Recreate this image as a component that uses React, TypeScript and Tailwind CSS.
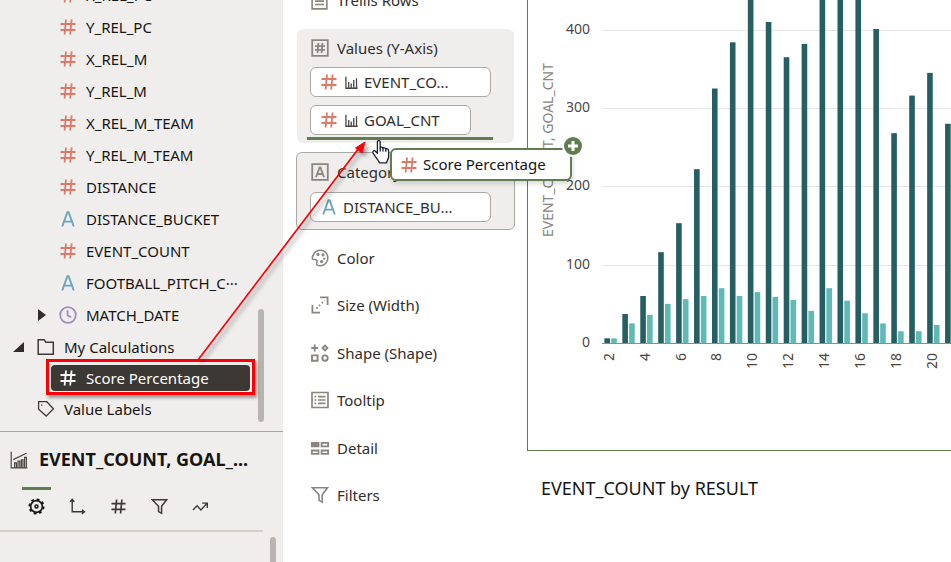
import React from "react";

type IconProps = { className?: string };

const HashIcon = ({ className = "" }: IconProps) => (
  <svg viewBox="0 0 16 16" className={className} fill="none" stroke="currentColor" strokeWidth="1.8" aria-hidden="true">
    <path d="M6 .5 4.6 15.5M11.6.5l-1.400 15M.5 5h15M.5 11h15" />
  </svg>
);

const LetterIcon = ({ className = "" }: IconProps) => (
  <svg viewBox="0 0 16 16" className={className} fill="none" stroke="currentColor" strokeWidth="1.9" aria-hidden="true">
    <path d="M2.200 15.500 7.400 1.200h1.200l5.200 14.300M4.200 10.600h7.600" />
  </svg>
);

const ClockIcon = ({ className = "" }: IconProps) => (
  <svg viewBox="0 0 18 18" className={className} fill="none" stroke="currentColor" strokeWidth="1.8" aria-hidden="true">
    <circle cx="9" cy="9" r="7.800" />
    <path d="M8.600 4.200v5.200l3.600 1.800" />
  </svg>
);

const FolderIcon = ({ className = "" }: IconProps) => (
  <svg viewBox="0 0 18 18" className={className} fill="none" stroke="currentColor" strokeWidth="1.500" aria-hidden="true">
    <path d="M1.200 16.300V1.700h6l1.600 2.600h7.500v12z" />
  </svg>
);

const TagIcon = ({ className = "" }: IconProps) => (
  <svg viewBox="0 0 18 18" className={className} fill="none" stroke="currentColor" strokeWidth="1.300" aria-hidden="true">
    <path d="M1.600 1.700h8.200l6.600 7-7.200 7.400-7.600-6.800z" />
    <circle cx="4.800" cy="5" r=".8" fill="currentColor" stroke="none" />
  </svg>
);

const MiniBarsIcon = ({ className = "" }: IconProps) => (
  <svg viewBox="0 0 14 14" className={className} fill="none" stroke="currentColor" strokeWidth="1.400" aria-hidden="true">
    <path d="M1 .8v12.400h12.600M4 13V6.400M6.700 13V8M9.400 13V4.400M12.400 13V2.400" />
  </svg>
);

const ChartIcon = ({ className = "" }: IconProps) => (
  <svg viewBox="0 0 18 18" className={className} fill="none" stroke="currentColor" strokeWidth="1.200" aria-hidden="true">
    <path d="M1.200.8v16h16.200M3.200 8.600l13.200-6.400M4.600 16.600v-4.800h1.800v4.800M8 16.600v-6.400h1.800v6.400M11.400 16.600V8.800h1.600v7.800M14.600 16.600V6.400h1.800v10.200" />
  </svg>
);

const GearIcon = ({ className = "" }: IconProps) => (
  <svg viewBox="0 0 18 18" className={className} fill="none" stroke="currentColor" aria-hidden="true">
    <circle cx="9" cy="9" r="7.600" strokeWidth="1.800" strokeDasharray="2.980 2.990" />
    <circle cx="9" cy="9" r="6.200" strokeWidth="1.700" />
    <circle cx="9" cy="9" r="1.600" strokeWidth="1.600" />
  </svg>
);

const AxisIcon = ({ className = "" }: IconProps) => (
  <svg viewBox="0 0 18 18" className={className} fill="none" stroke="currentColor" strokeWidth="1.500" aria-hidden="true">
    <path d="M3.400 1.600v13h12.400M1.200 4l2.200-2.600L5.600 4M13.600 12.400l2.800 2.200-2.800 2.200" />
  </svg>
);

const FunnelIcon = ({ className = "" }: IconProps) => (
  <svg viewBox="0 0 18 18" className={className} fill="none" stroke="currentColor" strokeWidth="1.600" aria-hidden="true">
    <path d="M1.400 1.800h15.200l-5.400 7v7.400l-3.200-1.800V8.800z" />
  </svg>
);

const TrendIcon = ({ className = "" }: IconProps) => (
  <svg viewBox="0 0 18 18" className={className} fill="none" stroke="currentColor" strokeWidth="1.500" aria-hidden="true">
    <path d="m1 12.600 4.400-4.400 4 4.400 6.400-6.800M10.800 5.400h5.400v5.200" />
  </svg>
);

const RowsIcon = ({ className = "" }: IconProps) => (
  <svg viewBox="0 0 18 18" className={className} fill="none" stroke="currentColor" strokeWidth="1.700" aria-hidden="true">
    <path d="M1.200 1.200h15.600v15.600H1.200zM4.200 5h9.600M4.200 8.600h9.600M4.200 12.200h9.600" />
  </svg>
);

const BoxHashIcon = ({ className = "" }: IconProps) => (
  <svg viewBox="0 0 18 18" className={className} fill="none" stroke="currentColor" strokeWidth="1.800" aria-hidden="true">
    <path d="M1.200 1.200h15.600v15.600H1.200zM7.400 4l-.8 10M11.400 4l-.8 10M4 7.200h10M4 10.800h10" />
  </svg>
);

const BoxLetterIcon = ({ className = "" }: IconProps) => (
  <svg viewBox="0 0 18 18" className={className} fill="none" stroke="currentColor" strokeWidth="1.800" aria-hidden="true">
    <path d="M1.200 1.200h15.600v15.600H1.200zM5 14.200 8.600 4.400h.8L13 14.200M6.200 11h5.600" />
  </svg>
);

const PaletteIcon = ({ className = "" }: IconProps) => (
  <svg viewBox="0 0 18 18" className={className} fill="none" stroke="currentColor" strokeWidth="1.600" aria-hidden="true">
    <path d="M2 6.400C3.400 3 6.200 1.200 9.400 1.200c4.400 0 7.400 3.400 7.400 7.600 0 4.400-3.200 8-7.600 8-2.400 0-3.800-1-3.600-2.400.2-1.600 1-2.200.2-3.200C4.800 10 3 11 1.800 10.200.8 9.400 1.400 7.800 2 6.400z" />
    <g fill="currentColor" stroke="none">
      <circle cx="7" cy="5.400" r="1.600" />
      <circle cx="12" cy="5.800" r="1.600" />
      <circle cx="13.200" cy="9.600" r="1.200" />
      <circle cx="10.600" cy="12.600" r="1.600" />
    </g>
  </svg>
);

const SizeIcon = ({ className = "" }: IconProps) => (
  <svg viewBox="0 0 18 18" className={className} fill="none" stroke="currentColor" strokeWidth="1.800" aria-hidden="true">
    <path d="M9 1.400h7.600V9M1.400 9v7.600H9" />
    <path d="M5.400 12.600 13.600 4.400" strokeDasharray="1.600 2.200" />
  </svg>
);

const ShapeIcon = ({ className = "" }: IconProps) => (
  <svg viewBox="0 0 18 18" className={className} fill="none" stroke="currentColor" strokeWidth="1.900" aria-hidden="true">
    <path d="M.2 4h7M3.700.5v7M14 1.600 16.400 4 14 6.400 11.600 4zM1 11.400h5.600v5.400H1z" />
    <circle cx="14" cy="14.100" r="2.700" />
  </svg>
);

const ListIcon = ({ className = "" }: IconProps) => (
  <svg viewBox="0 0 18 18" className={className} fill="none" stroke="currentColor" strokeWidth="1.700" aria-hidden="true">
    <path d="M1 1.500h16v15H1zM3.600 5.600h1.600M7 5.600h7.400M3.600 9h1.600M7 9h7.400M3.600 12.400h1.600M7 12.400h7.400" />
  </svg>
);

const DetailIcon = ({ className = "" }: IconProps) => (
  <svg viewBox="0 0 18 18" className={className} fill="none" stroke="currentColor" strokeWidth="1.800" aria-hidden="true">
    <path d="M.9 3.900h6.600v3.400H.9z" fill="currentColor" />
    <path d="M10.600 3.900h6.500v3.400h-6.500zM.9 11.500h6.600v3.400H.9zM10.600 11.500h6.500v3.400h-6.500z" />
  </svg>
);

type FieldKind = "number" | "text";

const FieldIcon = ({ kind }: { kind: FieldKind }) =>
  kind === "number" ? (
    <HashIcon className="size-4 shrink-0 text-[#dc7a68]" />
  ) : (
    <LetterIcon className="size-4 shrink-0 text-[#6aa3ba]" />
  );

const columns: { name: string; kind: FieldKind }[] = [
  { name: "X_REL_PC", kind: "number" },
  { name: "Y_REL_PC", kind: "number" },
  { name: "X_REL_M", kind: "number" },
  { name: "Y_REL_M", kind: "number" },
  { name: "X_REL_M_TEAM", kind: "number" },
  { name: "Y_REL_M_TEAM", kind: "number" },
  { name: "DISTANCE", kind: "number" },
  { name: "DISTANCE_BUCKET", kind: "text" },
  { name: "EVENT_COUNT", kind: "number" },
  { name: "FOOTBALL_PITCH_C···", kind: "text" },
];

function DataTree() {
  return (
    <section className="relative shrink-0 overflow-hidden border-b border-[#a8a4a1] pb-[6px]" aria-label="Data elements">
      <ul className="-mt-[21px] text-[15px] leading-5 text-[#161513]">
        {columns.map((c) => (
          <li key={c.name} className="flex h-8 items-center gap-[10px] pl-[60px] whitespace-nowrap">
            <FieldIcon kind={c.kind} />
            {c.name}
          </li>
        ))}
        <li className="flex h-8 items-center gap-[9px] pl-[38px]">
          <svg viewBox="0 0 8 12" className="h-3 w-2 shrink-0" fill="#312d2a" aria-hidden="true">
            <path d="M0 0v12l8-6z" />
          </svg>
          <span className="flex items-center gap-[9px] pl-1">
            <ClockIcon className="size-[18px] text-[#a58bbb]" />
            MATCH_DATE
          </span>
        </li>
        <li className="flex h-[31px] items-center gap-[13px] pl-[13px]">
          <svg viewBox="0 0 11 10" className="h-[10px] w-[11px] shrink-0" fill="#312d2a" aria-hidden="true">
            <path d="M11 0v10H0z" />
          </svg>
          <span className="flex items-center gap-[9px]">
            <FolderIcon className="size-[18px] text-[#3d3a36]" />
            My Calculations
          </span>
        </li>
        <li className="flex h-[31px] items-center pl-[51px]">
          <button type="button" className="flex h-[26px] w-[199px] items-center gap-[10px] rounded bg-[#3c3833] pl-[9px] text-white">
            <HashIcon className="size-4 text-white" />
            Score Percentage
          </button>
        </li>
        <li className="flex h-8 items-center gap-[9px] pl-[37px]">
          <TagIcon className="size-[18px] text-[#3d3a36]" />
          Value Labels
        </li>
      </ul>
      <div className="absolute right-[19px] bottom-[9px] h-[113px] w-[6px] rounded-full bg-[#bab4b0]" />
    </section>
  );
}

const propertyTabs = [
  { label: "General", Icon: GearIcon },
  { label: "Axis", Icon: AxisIcon },
  { label: "Values", Icon: HashIcon },
  { label: "Filters", Icon: FunnelIcon },
  { label: "Analytics", Icon: TrendIcon },
];

function PropertiesPanel() {
  return (
    <section className="relative flex-1 overflow-hidden" aria-label="Properties">
      <header className="flex h-[55px] items-center gap-[11px] pl-[10px]">
        <ChartIcon className="size-[18px] shrink-0 text-[#4a4642]" />
        <h2 className="text-[18px] font-bold whitespace-nowrap text-[#161513]">EVENT_COUNT, GOAL_...</h2>
      </header>
      <nav className="mr-5 flex h-[45px] gap-3 border-b-2 border-[#d3cfc9] pl-[22px]">
        {propertyTabs.map(({ label, Icon }, i) => (
          <button
            key={label}
            type="button"
            aria-label={label}
            className={
              i === 0
                ? "flex h-9 w-[29px] items-center justify-center border-t-3 border-[#5f7d4f] text-[#161513]"
                : "flex h-9 w-[29px] items-center justify-center border-t-3 border-transparent text-[#3d3a36]"
            }
          >
            <Icon className={i === 2 ? "size-[15px]" : "size-[17px]"} />
          </button>
        ))}
      </nav>
      <div className="absolute top-[105px] right-[7px] h-10 w-[6px] rounded-full bg-[#bab4b0]" />
    </section>
  );
}

function Pill({ kind, measure, className, children }: { kind: FieldKind; measure?: boolean; className: string; children: string }) {
  return (
    <button
      type="button"
      className={`flex h-[30px] items-center gap-2 rounded-md border border-[#aba7a4] bg-white pl-[10px] text-[15px] whitespace-nowrap text-[#312d2a] ${className}`}
    >
      <FieldIcon kind={kind} />
      {measure && <MiniBarsIcon className="size-[13px] shrink-0 text-[#4a4642]" />}
      <span className={measure ? "-ml-[2px]" : "-ml-[2px]"}>{children}</span>
    </button>
  );
}

const dropTargets = [
  { label: "Color", Icon: PaletteIcon },
  { label: "Size (Width)", Icon: SizeIcon },
  { label: "Shape (Shape)", Icon: ShapeIcon },
  { label: "Tooltip", Icon: ListIcon },
  { label: "Detail", Icon: DetailIcon },
  { label: "Filters", Icon: FunnelIcon },
];

function GrammarPanel() {
  return (
    <section className="w-[244px] shrink-0 overflow-hidden pr-3 pl-[13px] text-[15px] leading-5 text-[#312d2a]" aria-label="Grammar">
      <div className="-mt-[10px] flex h-[39px] items-start gap-[9px] pl-[15px]">
        <RowsIcon className="mt-[3px] size-[17px] text-[#8b8580]" />
        Trellis Rows
      </div>
      <div className="mx-px flex h-[114px] flex-col gap-[9px] rounded-md bg-[#f0eeed] px-[13px] pt-[9px]">
        <div className="flex h-5 items-center gap-2">
          <BoxHashIcon className="ml-px size-[18px] text-[#8b8580]" />
          Values (Y-Axis)
        </div>
        <div className="flex flex-col gap-2">
          <Pill kind="number" measure className="w-[181px]">
            EVENT_CO...
          </Pill>
          <Pill kind="number" measure className="w-[161px]">
            GOAL_CNT
          </Pill>
          <div className="-mx-[3px] -mt-[6px] h-[3px] w-[186px] shrink-0 bg-[#5f7d4f]" />
        </div>
      </div>
      <div className="mt-[9px] flex h-[78px] flex-col gap-[10px] rounded-md border border-[#aba7a4] bg-[#f0eeed] px-[13px] pt-[9px]">
        <div className="flex h-5 items-center gap-2">
          <BoxLetterIcon className="ml-px size-[18px] text-[#8b8580]" />
          Category (X-Axis)
        </div>
        <Pill kind="text" className="w-[181px]">
          DISTANCE_BU...
        </Pill>
      </div>
      <ul className="mt-[4px] flex h-[285px] flex-col">
        {dropTargets.map(({ label, Icon }) => (
          <li key={label} className="flex flex-1 items-center gap-2 pl-[15px]">
            <Icon className="size-[18px] text-[#8b8580]" />
            {label}
          </li>
        ))}
      </ul>
    </section>
  );
}

const events = [6, 37, 60, 116, 153, 222, 325, 384, 450, 410, 365, 382, 450, 450, 450, 401, 268, 316, 345, 280];
const goals = [6, 25, 36, 50, 56, 60, 70, 60, 65, 59, 55, 41, 70, 54, 38, 25, 15, 15, 23, 20];

const BASELINE = 343;
const UNIT = 0.783;
const FIRST_BAR = 76.4;
const STEP = 17.93;

function BarChart() {
  return (
    <svg width="100%" height="450" className="block overflow-hidden" role="img" aria-label="EVENT_COUNT, GOAL_CNT by DISTANCE_BUCKET">
      <text transform="translate(25 237) rotate(-90)" className="fill-[#8b8580] text-[14px]">
        EVENT_COUNT, GOAL_CNT
      </text>
      {[0, 100, 200, 300, 400].map((v) => (
        <g key={v}>
          {v > 0 && <rect x="74" y={Math.round(BASELINE - v * UNIT)} width="100%" height="1" fill="#e4e6ea" />}
          <text x="62" y={BASELINE - v * UNIT + 4} textAnchor="end" className="fill-[#4a4642] text-[14px]">
            {v}
          </text>
        </g>
      ))}
      {events.map((v, i) => (
        <rect key={i} x={FIRST_BAR + i * STEP} y={BASELINE - v * UNIT} width="5.600" height={v * UNIT} fill="#255e63" />
      ))}
      {goals.map((v, i) => (
        <rect key={i} x={FIRST_BAR + 6.8 + i * STEP} y={BASELINE - v * UNIT} width="5.600" height={v * UNIT} fill="#5fb9b5" />
      ))}
      <rect x="74" y="343" width="100%" height="1" fill="#8b8d90" />
      {[2, 4, 6, 8, 10, 12, 14, 16, 18, 20].map((n, i) => (
        <text
          key={n}
          transform={`translate(${FIRST_BAR + 9.500 + i * 2 * STEP} 353) rotate(-90)`}
          textAnchor="end"
          className="fill-[#4a4642] text-[14px]"
        >
          {n}
        </text>
      ))}
    </svg>
  );
}

function DragOverlay() {
  return (
    <>
      <div className="pointer-events-none absolute top-[359px] left-[46px] h-9 w-[209px] border-3 border-[#fb0007] shadow-[2px_3px_3px_rgba(0,0,0,0.35)]" />
      <svg className="pointer-events-none absolute inset-0 size-full" aria-hidden="true">
        <g className="drop-shadow-[3px_3px_2px_rgba(0,0,0,0.4)]" stroke="#fb0007" fill="#fb0007">
          <path d="M198 360 359 148" strokeWidth="1.700" />
          <path d="m365 142-9.500 6 6.500 5z" strokeWidth="1" />
        </g>
      </svg>
      <div className="absolute top-[148px] left-[390px] flex h-[33px] w-[182px] items-center gap-[6px] rounded-md border-2 border-[#5f7d4f] bg-white pl-[9px] text-[15px] whitespace-nowrap text-[#161513] shadow-[1px_3px_5px_rgba(0,0,0,0.15)]">
        <HashIcon className="size-4 text-[#dc7a68]" />
        Score Percentage
        <svg viewBox="0 0 22 22" className="absolute -top-[15px] -right-[14px] size-[22px]" aria-hidden="true">
          <circle cx="11" cy="11" r="11" fill="#fff" />
          <circle cx="11" cy="11" r="9" fill="#5f7d4f" />
          <path d="M11 6v10M6 11h10" stroke="#fff" strokeWidth="3" />
        </svg>
      </div>
      <svg viewBox="0 0 18 24" className="absolute top-[140px] left-[372px] h-6 w-[18px]" fill="#fff" stroke="#1b2033" strokeWidth="1.300" strokeLinejoin="round" aria-hidden="true">
        <path d="M5.400 1.800c0-1.600 2.800-1.600 2.800 0v6c.2-1 2.700-.9 2.800.6.300-1 2.700-.8 2.800.8.500-.8 2.800-.4 2.800 1.200v6c0 3-1.600 3.800-2 6.400H7.400c-.4-2-2.600-4.200-4-6.200L1 12.800c-.8-1.600 1.200-2.800 2.400-1.600l2 2z" />
        <path d="M8.200 7.800v3.600M11 8.400v3M13.800 9.200v2.600" />
      </svg>
    </>
  );
}

export default function App() {
  return (
    <main className="relative flex h-screen overflow-hidden bg-white font-['Noto_Sans','Open_Sans',sans-serif]">
      <aside className="flex w-[283px] shrink-0 flex-col bg-[#f0eeed]">
        <DataTree />
        <PropertiesPanel />
      </aside>
      <GrammarPanel />
      <section className="min-w-0 flex-1">
        <div className="border-b border-l border-[#5f7d4f]">
          <BarChart />
        </div>
        <h3 className="pt-[25px] pl-[14px] text-[18px] leading-6 text-[#161513]">EVENT_COUNT by RESULT</h3>
      </section>
      <DragOverlay />
    </main>
  );
}
